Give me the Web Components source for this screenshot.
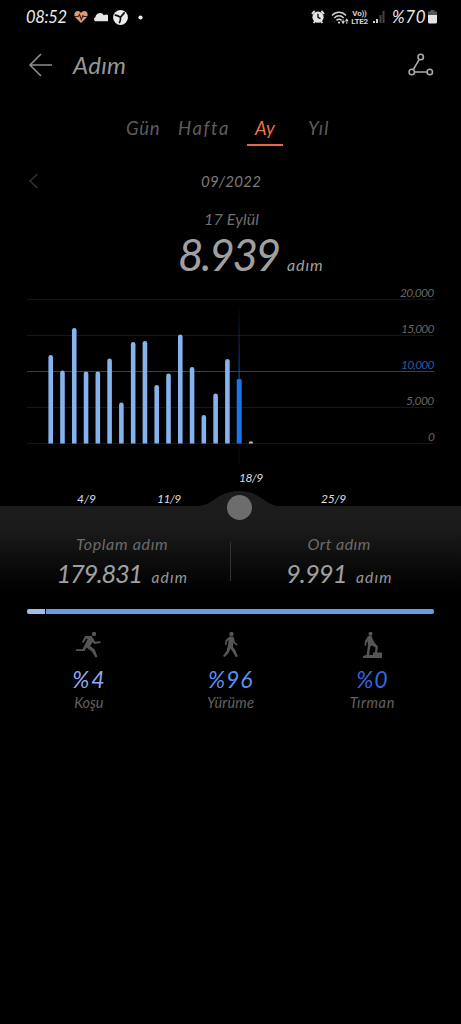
<!DOCTYPE html>
<html lang="tr">
<head>
<meta charset="utf-8">
<meta name="viewport" content="width=device-width">
<title>Adım</title>
<style>
html,body{margin:0;background:#000;height:100%;overflow:hidden}
body{font-family:Lato,"Noto Sans",sans-serif;font-style:italic;color:#929292}
</style>
</head>
<body>
<steps-app></steps-app>
<script>
// Spaces its letters so that the label fills the width in "w".
class InkText extends HTMLElement{
  constructor(){super();this.attachShadow({mode:'open'}).innerHTML=`<style>
  :host{display:block;white-space:nowrap;flex:none}
  span{display:inline-block;white-space:nowrap}</style><span><slot></slot></span>`}
  connectedCallback(){
    const w=+this.getAttribute('w'),s=+this.getAttribute('s'),c=this.getAttribute('c');
    this.style.fontSize=s+'px';
    this.style.lineHeight=Math.round(s*1.25)+'px';
    if(c)this.style.color=c;
    this.style.width=w+'px';
    const n=this.textContent.length,span=this.shadowRoot.querySelector('span');
    const natural=span.getBoundingClientRect().width;
    if(n>1)span.style.letterSpacing=((w-natural)/(n-.5)).toFixed(3)+'px';
  }
}

class StatusBar extends HTMLElement{
  constructor(){super();this.attachShadow({mode:'open'}).innerHTML=`<style>
  :host{display:flex;height:34px;align-items:center;padding:0 24px 0 26px;box-sizing:border-box}
  svg{display:block;flex:none}.gap{flex:1}
  .net{font:bold 8px/8px Roboto,sans-serif;color:#d5d5d5;width:19px;margin:1px 2px 0 1px;text-align:center;letter-spacing:-.2px}
  .net div{white-space:nowrap}
  </style>
  <ink-text w="41" s="16.5" c="#ededed">08:52</ink-text>
  <svg style="margin-left:7px" width="14" height="14" viewBox="0 0 14 14"><path d="M7 13 1.2 7.2C-.6 5 .5 1 3.6 1 5.200 1 6.300 1.800 7 3c.7-1.200 1.800-2 3.400-2 3.100 0 4.200 4 2.400 6.200z" fill="#dc9a78"/><path d="M1 6.500h3.200l1.300-2 1.800 5 1.700-4 .8 1H13" fill="none" stroke="#3b211a" stroke-width="1.100"/></svg>
  <svg style="margin-left:5px" width="15" height="10" viewBox="0 0 15 10"><path d="M2.200 9.200A2.200 2.200 0 0 1 2.400 5.200 4.600 4.600 0 0 1 10.900 3.200 3.400 3.400 0 0 1 14.800 9.200z" fill="#e6e6e6"/></svg>
  <svg style="margin-left:5px" width="15" height="15" viewBox="0 0 15 15"><circle cx="7.500" cy="7.500" r="7.400" fill="#ececec"/><path d="M2.300 5.100c2 .2 3.600.9 5.200 2.200 1.300-1.400 2.300-2.700 3.700-4.400M7.500 7.300c.3 2-.2 3.700-1 5.200" fill="none" stroke="#111" stroke-width="1.700" stroke-linecap="round"/></svg>
  <svg style="margin-left:10px" width="5" height="5"><circle cx="2.500" cy="2.500" r="2.100" fill="#eee"/></svg>
  <div class="gap"></div>
  <svg width="14" height="14" viewBox="0 0 14 14"><circle cx="7" cy="7.200" r="5.600" fill="#e4e4e4"/><path d="M.9 3.800 3.700 1M13.100 3.800 10.300 1M2.600 13l1.300-1.500M11.400 13l-1.300-1.500" stroke="#e4e4e4" stroke-width="1.800"/><path d="M7 3.800v3.600l2.500 1.300" fill="none" stroke="#000" stroke-width="1.300"/></svg>
  <svg style="margin-left:6px" width="18" height="15" viewBox="0 0 18 15"><g fill="none" stroke="#d0d0d0" stroke-width="1.500"><path d="M1 5.400C5 1.200 11 1.200 15 5.400M3.300 8c2.800-2.900 6.600-2.900 9.400 0M5.500 10.400c1.500-1.500 3.500-1.500 5 0"/></g><circle cx="8" cy="12.600" r="1.100" fill="#d0d0d0"/><path d="M10.200 11.300h3.800L12.100 14.300zM11.600 9.500h1v2h-1zM13.900 11.300h3.800L15.800 8.300zM15.300 11h1v2.700h-1z" fill="#d0d0d0"/></svg>
  <div class="net" style="font-style:normal"><div>Vo))</div><div>LTE2</div></div>
  <svg style="margin-left:1px" width="13" height="14" viewBox="0 0 13 14"><path d="M1 11h2v2H1zM4 9h2v4H4z" fill="#ccc"/><path d="M7.500 5h2v8h-2zM10.500 1h2v12h-2z" fill="#444"/></svg>
  <ink-text style="margin:-2px 0 0 7px" w="34" s="17" c="#e6e6e6">%70</ink-text>
  <svg style="margin-left:2px" width="9" height="14" viewBox="0 0 9 14"><path d="M2.500 0h4v1.500H9V6H0V1.500h2.500z" fill="#555"/><path d="M0 5h9v7a1.500 1.500 0 0 1-1.500 1.500h-6A1.500 1.500 0 0 1 0 12z" fill="#e4e4e4"/></svg>`}
}

class TitleBar extends HTMLElement{
  constructor(){super();this.attachShadow({mode:'open'}).innerHTML=`<style>
  :host{display:flex;height:62px;align-items:center;padding:0 27px 0 28px;box-sizing:border-box}
  ink-text{margin-left:20px}svg{flex:none;display:block}.gap{flex:1}</style>
  <svg width="25" height="24" viewBox="0 0 25 24"><path d="M13 1 2 12l11 11M2 12h22" fill="none" stroke="#8d8d8d" stroke-width="1.600"/></svg>
  <ink-text w="53" s="24" c="#979797"><slot></slot></ink-text>
  <div class="gap"></div>
  <svg width="26" height="24" viewBox="0 0 26 24"><g fill="none" stroke="#aaa" stroke-width="1.600"><circle cx="12.700" cy="4" r="2.700"/><circle cx="3.800" cy="19" r="2.700"/><circle cx="21.800" cy="19" r="2.700"/><path d="M11.300 6.300 5.200 16.700M6.500 19H19"/></g></svg>`}
  connectedCallback(){
    const t=this.shadowRoot.querySelector('ink-text');
    t.textContent=this.textContent;t.connectedCallback();
  }
}

class RangeTabs extends HTMLElement{
  constructor(){super();this.attachShadow({mode:'open'}).innerHTML=`<style>
  :host{display:flex;height:52px;padding:21px 0 0 126px;box-sizing:border-box;align-items:flex-start}
  .on{width:36px;height:27px;border-bottom:2px solid #e8683d;margin:0 25px 0 18px;display:flex;justify-content:center}
  </style><ink-text w="34" s="18.500" c="#5d5d5d">Gün</ink-text>
  <ink-text style="margin-left:18px" w="51" s="18.500" c="#5d5d5d">Hafta</ink-text>
  <div class="on"><ink-text w="20" s="18.500" c="#ef7040">Ay</ink-text></div>
  <ink-text w="21" s="18.500" c="#5d5d5d">Yıl</ink-text>`}
}

class DayReadout extends HTMLElement{
  constructor(){super();this.attachShadow({mode:'open'}).innerHTML=`<style>
  :host{display:block;height:136px}
  .month{display:flex;height:66px;align-items:center;padding-left:28px}
  .day{padding-left:204px;height:20px;margin-top:-5px}
  .val{display:flex;align-items:baseline;padding-left:178px;gap:7px;margin-top:-2px}</style>
  <div class="month"><svg width="12" height="18" viewBox="0 0 12 18"><path d="M9.500 2 2 9l7.500 7" fill="none" stroke="#303030" stroke-width="1.600"/></svg>
  <ink-text style="margin-left:161px" w="60" s="15" c="#7c7c7c">09/2022</ink-text></div>
  <div class="day"><ink-text w="55" s="16" c="#707070">17 Eylül</ink-text></div>
  <div class="val"><ink-text w="102" s="44" c="#a0a0a0">8.939</ink-text><ink-text w="36" s="16" c="#a0a0a0">adım</ink-text></div>`}
}

class StepChart extends HTMLElement{
  constructor(){super();
    const tops=[355,370.5,328,371.5,371.5,358.5,402.5,342,341,385,373.5,334.5,367,415,393.5,359];
    const bars=tops.map((t,i)=>{const x=(50.700+11.780*i-2.300).toFixed(2),y=t-284;
      return `<path d="M${x} 159.500V${y+2.300}a2.300 2.300 0 0 1 4.600 0V159.500z" fill="#84b3ee"/>`}).join('');
    const lines=[15.5,51.5,123.5,159.5].map(y=>`<path d="M27 ${y}H434" stroke="#151617"/>`).join('');
    this.attachShadow({mode:'open'}).innerHTML=`<style>
  :host{display:block;height:222px;position:relative}
  svg{position:absolute;left:0;top:0;display:block}
  .scale{display:flex;flex-direction:column;align-items:flex-end;padding-right:27px;gap:21px;padding-top:1px;position:relative}
  .axis{display:flex;position:relative}
  </style>
  <svg width="461" height="222" viewBox="0 0 461 222">
  <defs><linearGradient id="g" x1="0" y1="0" x2="0" y2="1"><stop offset="0" stop-color="#1462c8" stop-opacity="0"/><stop offset="1" stop-color="#1462c8" stop-opacity=".75"/></linearGradient></defs>
  ${lines}<path d="M27 87.500H434" stroke="#213f8c"/>${bars}
  <rect x="238.500" y="20" width="1.200" height="76" fill="url(#g)"/><path d="M239 160v20" stroke="#0c0d10"/>
  <path d="M236.700 159.500V96.500a1.500 1.500 0 0 1 1.500-1.500h2a1.500 1.500 0 0 1 1.500 1.500V159.500z" fill="#1c75e8"/>
  <path d="M248.700 159.500a2.200 2.200 0 0 1 4.400 0z" fill="#aebdcc"/>
  <path d="M198 222c15 0 19-15 41-15s26 15 41 15z" fill="#1c1c1c"/></svg>
  <div class="scale">
  <ink-text w="34" s="12" c="#646464">20,000</ink-text><ink-text w="33" s="12" c="#646464">15,000</ink-text>
  <ink-text w="33" s="12" c="#2f57a6">10,000</ink-text><ink-text w="28" s="12" c="#646464">5,000</ink-text>
  <ink-text w="6" s="12" c="#646464">0</ink-text></div>
  <div class="axis" style="padding:26px 0 0 239px"><ink-text w="24" s="12" c="#dedede">18/9</ink-text></div>
  <div class="axis" style="padding:6px 0 0 77px"><ink-text w="19" s="12" c="#dedede">4/9</ink-text>
  <ink-text style="margin-left:61px" w="24" s="12" c="#dedede">11/9</ink-text>
  <ink-text style="margin-left:140px" w="25" s="12" c="#dedede">25/9</ink-text></div>`}
}

class TotalsPanel extends HTMLElement{
  constructor(){super();this.attachShadow({mode:'open'}).innerHTML=`<style>
  :host{display:flex;height:103px;box-sizing:border-box;background:linear-gradient(#1c1c1c 0,#1b1b1b 22px,#0f0f0f 50px,#030303 78px,#000 90px);position:relative}
  .knob{position:absolute;left:226.500px;top:-11.500px;width:25px;height:25px;border-radius:50%;background:#6d6d6d}
  .half{flex:1;display:flex;flex-direction:column;align-items:center;padding-top:28px;box-sizing:border-box}
  .rule{width:1px;height:39px;margin-top:36px;background:#333}
  .v{display:flex;align-items:baseline;gap:9px;margin-top:3px}</style>
  <div class="knob"></div>
  <div class="half" style="padding-left:14px"><ink-text w="92" s="16" c="#6b6b6b">Toplam adım</ink-text>
  <div class="v"><ink-text w="86" s="25.500" c="#a0a0a0">179.831</ink-text><ink-text w="36" s="15.500" c="#989898">adım</ink-text></div></div>
  <div class="rule"></div>
  <div class="half" style="padding-right:14px"><ink-text w="63" s="16" c="#6b6b6b">Ort adım</ink-text>
  <div class="v"><ink-text w="61" s="25.500" c="#a0a0a0">9.991</ink-text><ink-text w="36" s="15.500" c="#989898">adım</ink-text></div></div>`}
}

class SplitBar extends HTMLElement{
  constructor(){super();this.attachShadow({mode:'open'}).innerHTML=`<style>
  :host{display:flex;height:5px;margin:0 27px;gap:1px;border-radius:2px;overflow:hidden}
  i{display:block;background:#a1bdf0;width:18px}b{display:block;flex:1;background:#659be5}</style><i></i><b></b>`}
}

class ActivityItem extends HTMLElement{
  constructor(){super();
    const icons={
      run:'<circle cx="18" cy="3" r="2.200"/><path d="M9 5h6.500l2.300 3.500 1.300 2.300 5.400-.5v1.800l-6 .9-2-1.700-2.300 3.700 4.500 3.500 2.800 7.500-2 .5-3.500-6-5.500-4-2 3.500H0V18.200h6.500l3-6 2.200-4.500H10L7.500 12 6 11z"/>',
      walk:'<circle cx="13.500" cy="3" r="2.200"/><path d="M11.500 5.500h3.300l1.200 1.500.7 4 3 2.300-.9 1.200L15.300 12l-.5 3.500 3 4.500 2 5.500-2 .5-3.300-5.500-2.200-3-1.300 4L6.500 26 5 25l3.500-5 1.800-7L10.500 9 9 10.500 8.500 14H7l.3-4.500z"/>',
      climb:'<circle cx="11.500" cy="2.800" r="2.100"/><path d="M9 5h3.500l1.500 4 2 3.200 3 3.300-.9 6H23v5.500H4V25l3.500-1 1.300-8V10l-1.300 2-.5 3-1.500-.5.500-4.500zM11.200 15.500 10.200 24H14v-2.500h2l.5-5-3.500-2z" fill-rule="evenodd"/>'};
    const a=n=>this.getAttribute(n);
    this.attachShadow({mode:'open'}).innerHTML=`<style>
  :host{display:flex;flex-direction:column;align-items:center;flex:1}
  svg{display:block;fill:#555}.p{margin-top:6px}.l{margin-top:0}</style>
  <svg width="26" height="28" viewBox="0 0 26 28">${icons[a('kind')]}</svg>
  <ink-text class="p" w="${a('pw')}" s="23" c="${a('tint')}">${a('value')}</ink-text>
  <ink-text class="l" w="${a('lw')}" s="14.500" c="#606060">${a('label')}</ink-text>`}
}

class StepsApp extends HTMLElement{
  constructor(){super();this.attachShadow({mode:'open'}).innerHTML=`<style>
  :host{display:flex;flex-direction:column;width:461px;height:1024px;background:#000}
  :host>*{flex:none}
  .acts{display:flex;padding:17px 18px 0}</style>
  <status-bar></status-bar><title-bar>Adım</title-bar><range-tabs></range-tabs><day-readout></day-readout>
  <step-chart></step-chart><totals-panel></totals-panel><split-bar></split-bar>
  <div class="acts">
  <activity-item kind="run" value="%4" pw="33" label="Koşu" lw="29" tint="#8faaf2"></activity-item>
  <activity-item kind="walk" value="%96" pw="45" label="Yürüme" lw="47" tint="#5c8df0"></activity-item>
  <activity-item kind="climb" value="%0" pw="32" label="Tırman" lw="45" tint="#3468dc"></activity-item></div>`}
}
for(const [n,c] of [['ink-text',InkText],['status-bar',StatusBar],['title-bar',TitleBar],['range-tabs',RangeTabs],['day-readout',DayReadout],['step-chart',StepChart],['totals-panel',TotalsPanel],['split-bar',SplitBar],['activity-item',ActivityItem],['steps-app',StepsApp]])customElements.define(n,c);
</script>
</body>
</html>
